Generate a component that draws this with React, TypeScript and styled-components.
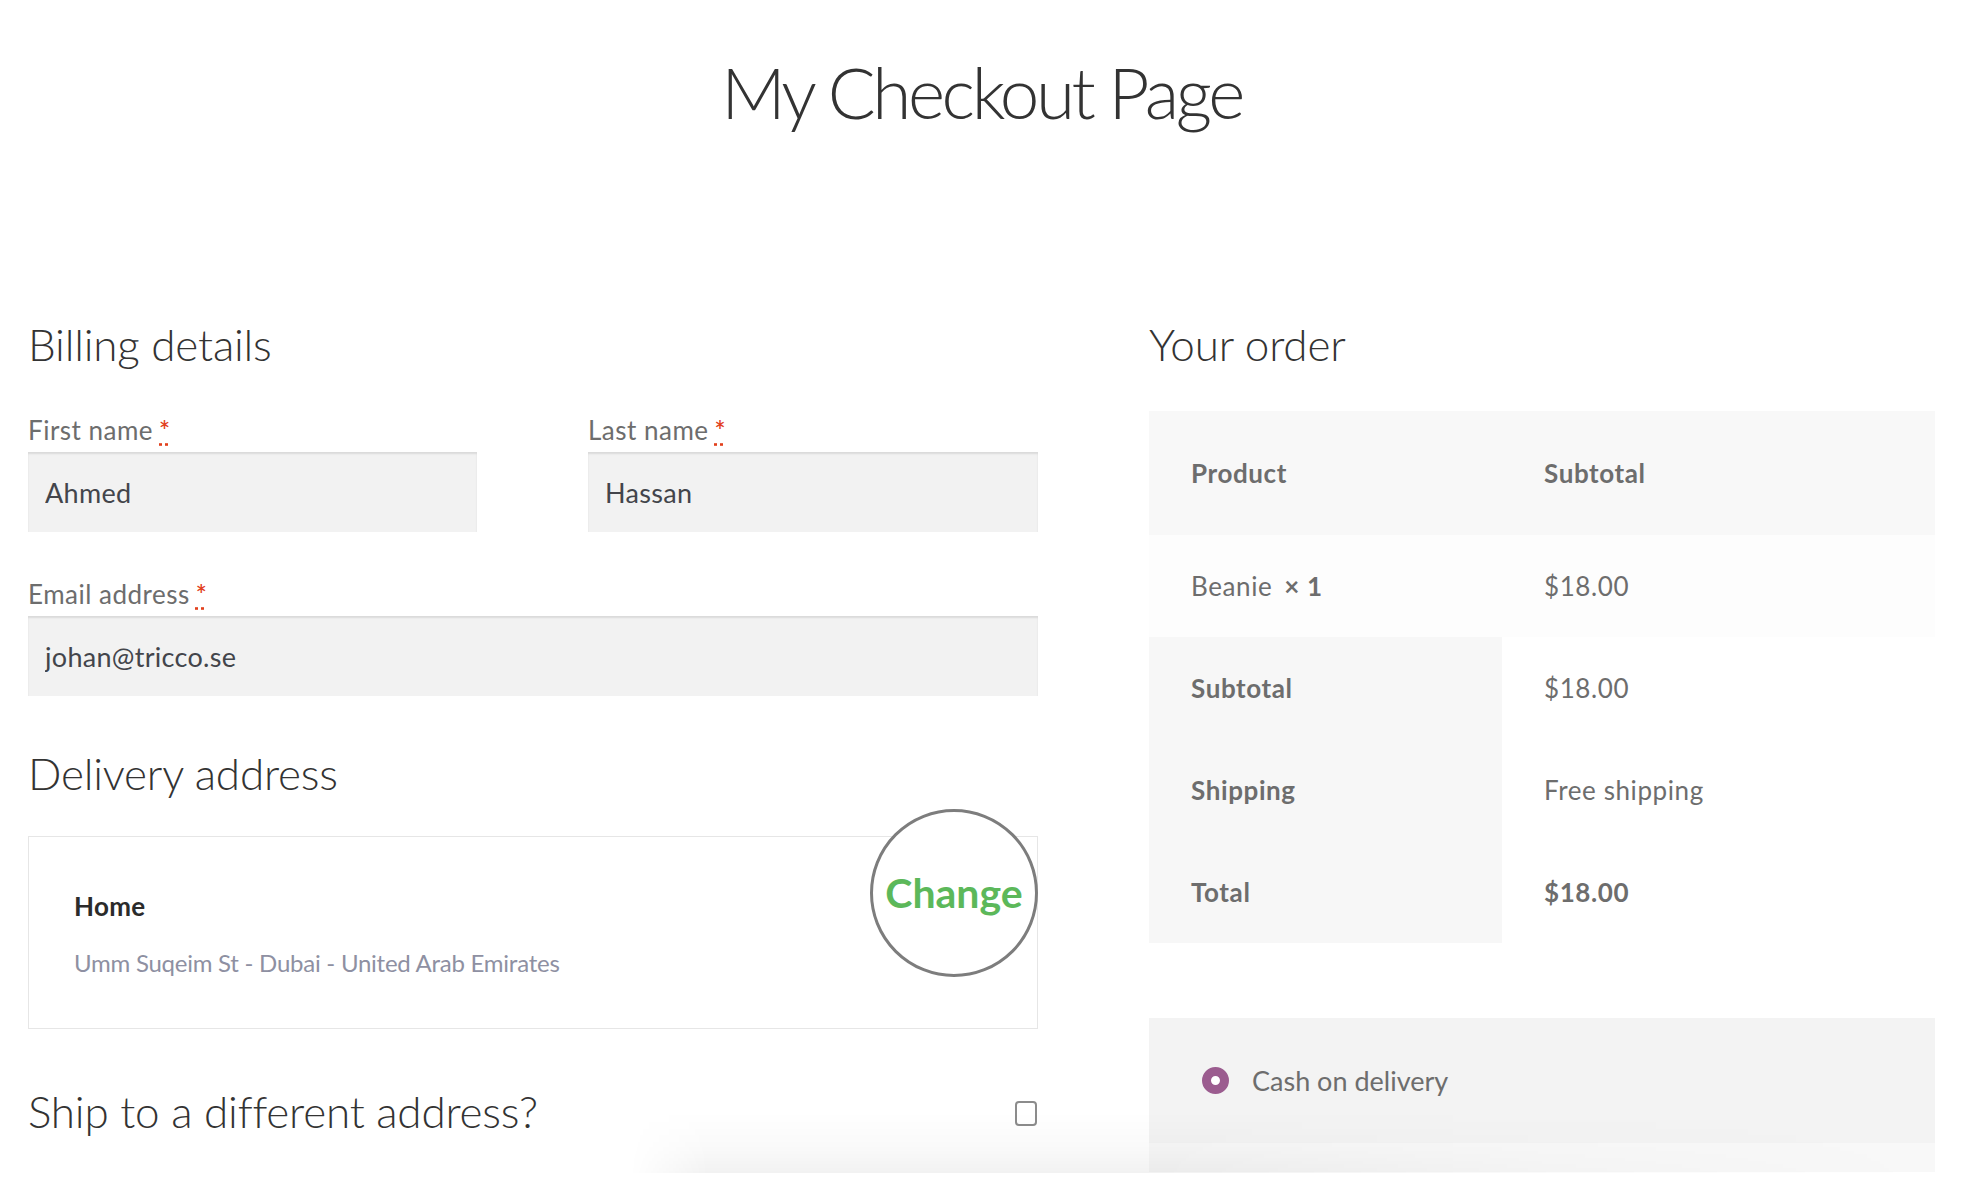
import React from 'react';
import styled, { createGlobalStyle } from 'styled-components';

const GlobalStyle = createGlobalStyle`
  html, body {
    margin: 0;
    padding: 0;
    background: #ffffff;
  }
  body {
    font-family: Lato, "Noto Sans", "Liberation Sans", sans-serif;
    color: #6d6d6d;
    -webkit-font-smoothing: antialiased;
  }
  * {
    box-sizing: border-box;
  }
`;

const Page = styled.div`
  position: relative;
  width: 1988px;
  height: 1184px;
  overflow: hidden;
  padding: 56px 53px 0 28px;
`;

const Title = styled.h1`
  margin: 0;
  font-size: 71px;
  line-height: 71px;
  font-weight: 300;
  color: #333333;
  text-align: center;
  letter-spacing: -3.4px;
`;

const Columns = styled.div`
  display: grid;
  grid-template-columns: 1010px 786px;
  justify-content: space-between;
  margin-top: 196px;
`;

const Column = styled.section`
  display: flex;
  flex-direction: column;
`;

const SectionHeading = styled.h3`
  margin: 0;
  font-size: 44px;
  line-height: 43px;
  font-weight: 300;
  color: #333333;
  letter-spacing: -0.2px;
`;

const FieldGrid = styled.div`
  display: grid;
  grid-template-columns: 449px 450px;
  justify-content: space-between;
  row-gap: 50px;
  margin-top: 52px;
`;

const Field = styled.div<{ $wide?: boolean }>`
  display: flex;
  flex-direction: column;
  gap: 9px;
  grid-column: ${(p) => (p.$wide ? '1 / -1' : 'auto')};
`;

const Label = styled.label`
  font-size: 26px;
  line-height: 25px;
  color: #6d6d6d;
  letter-spacing: 0.5px;
`;

const Required = styled.abbr`
  color: #e2401c;
  font-weight: 600;
  text-decoration: underline dotted;
  text-underline-offset: 3px;
  margin-left: 6px;
  cursor: help;
`;

const TextInput = styled.input`
  height: 80px;
  width: 100%;
  border: 0;
  outline: none;
  padding: 0 17px;
  background: #f2f2f2;
  box-shadow: inset 0 2px 2px rgba(0, 0, 0, 0.1);
  font-family: inherit;
  font-size: 27px;
  letter-spacing: 0.3px;
  color: #43454b;
`;

const DeliveryHeading = styled(SectionHeading)`
  margin-top: 56px;
`;

const AddressCard = styled.div`
  position: relative;
  margin-top: 41px;
  height: 193px;
  border: 1px solid #e6e6e6;
  padding: 56px 45px 0;
`;

const AddressName = styled.div`
  font-size: 26px;
  line-height: 26px;
  font-weight: 700;
  color: #2b2b2b;
  letter-spacing: 0.3px;
`;

const AddressLine = styled.div`
  margin-top: 32px;
  font-size: 24px;
  line-height: 24px;
  letter-spacing: -0.25px;
  color: #8e90a2;
`;

const ChangeBubble = styled.button`
  position: absolute;
  top: -28px;
  right: -1px;
  width: 168px;
  height: 168px;
  border-radius: 50%;
  border: 3px solid #7d7d7d;
  background: #ffffff;
  display: flex;
  align-items: center;
  justify-content: center;
  padding: 0 0 2px;
  font-family: inherit;
  font-size: 41px;
  font-weight: 700;
  color: #5cb85a;
  cursor: pointer;
`;

const ShipRow = styled.div`
  display: flex;
  align-items: center;
  justify-content: space-between;
  margin-top: 61px;
`;

const Checkbox = styled.input`
  appearance: none;
  width: 22px;
  height: 25px;
  margin: 4px 1px 0 0;
  border: 2px solid #8c8c8c;
  border-radius: 4px;
  background: #ffffff;
`;

const OrderTable = styled.table`
  margin-top: 45px;
  width: 100%;
  border-collapse: collapse;
  table-layout: fixed;
  font-size: 26px;
  letter-spacing: 0.6px;
  color: #6d6d6d;
`;

const HeadCell = styled.th<{ $w?: number }>`
  width: ${(p) => (p.$w ? `${p.$w}px` : 'auto')};
  height: 124px;
  padding: 0 42px;
  text-align: left;
  font-weight: 700;
  background: #f8f8f8;
`;

const Cell = styled.td<{ $bg?: string; $strong?: boolean }>`
  height: 102px;
  padding: 0 42px;
  text-align: left;
  background: ${(p) => p.$bg || '#ffffff'};
  font-weight: ${(p) => (p.$strong ? 700 : 400)};
`;

const RowHead = styled.th`
  height: 102px;
  padding: 0 42px;
  text-align: left;
  font-weight: 700;
  background: #f7f7f7;
`;

const Qty = styled.strong`
  margin-left: 12px;
  font-weight: 700;
`;

const Payment = styled.div`
  margin-top: 75px;
  background: #f3f3f3;
  display: flex;
  flex-direction: column;
`;

const PaymentMethod = styled.label`
  height: 125px;
  display: flex;
  align-items: center;
  gap: 23px;
  padding-left: 53px;
  font-size: 27px;
  color: #6d6d6d;
`;

const Radio = styled.span`
  width: 27px;
  height: 27px;
  border-radius: 50%;
  background: #ffffff;
  border: 9px solid #9b5c8f;
  flex-shrink: 0;
`;

const PaymentFooter = styled.div`
  height: 29px;
  background: #f8f8f8;
`;

const BottomHaze = styled.div`
  position: absolute;
  left: 630px;
  right: 53px;
  top: 1112px;
  height: 61px;
  pointer-events: none;
  background: linear-gradient(to bottom, rgba(0, 0, 0, 0), rgba(0, 0, 0, 0.02) 55%, rgba(0, 0, 0, 0.05));
  -webkit-mask-image: linear-gradient(to right, transparent, #000 6%, #000 40%, rgba(0, 0, 0, 0.35) 70%, transparent);
  mask-image: linear-gradient(to right, transparent, #000 6%, #000 40%, rgba(0, 0, 0, 0.35) 70%, transparent);
`;

const BottomEdge = styled.div`
  position: absolute;
  left: 0;
  right: 0;
  top: 1173px;
  bottom: 0;
  background: #ffffff;
`;

export default function App() {
  return (
    <>
      <GlobalStyle />
      <Page>
        <Title>My Checkout Page</Title>
        <Columns>
          <Column>
            <SectionHeading>Billing details</SectionHeading>
            <FieldGrid>
              <Field>
                <Label>
                  First name<Required title="required">*</Required>
                </Label>
                <TextInput defaultValue="Ahmed" />
              </Field>
              <Field>
                <Label>
                  Last name<Required title="required">*</Required>
                </Label>
                <TextInput defaultValue="Hassan" />
              </Field>
              <Field $wide>
                <Label>
                  Email address<Required title="required">*</Required>
                </Label>
                <TextInput defaultValue="johan@tricco.se" />
              </Field>
            </FieldGrid>

            <DeliveryHeading>Delivery address</DeliveryHeading>
            <AddressCard>
              <AddressName>Home</AddressName>
              <AddressLine>Umm Suqeim St - Dubai - United Arab Emirates</AddressLine>
              <ChangeBubble>Change</ChangeBubble>
            </AddressCard>

            <ShipRow>
              <SectionHeading>Ship to a different address?</SectionHeading>
              <Checkbox type="checkbox" />
            </ShipRow>
          </Column>

          <Column>
            <SectionHeading>Your order</SectionHeading>
            <OrderTable>
              <thead>
                <tr>
                  <HeadCell $w={353}>Product</HeadCell>
                  <HeadCell>Subtotal</HeadCell>
                </tr>
              </thead>
              <tbody>
                <tr>
                  <Cell $bg="#fdfdfd">
                    Beanie<Qty>× 1</Qty>
                  </Cell>
                  <Cell $bg="#fdfdfd">$18.00</Cell>
                </tr>
              </tbody>
              <tfoot>
                <tr>
                  <RowHead>Subtotal</RowHead>
                  <Cell>$18.00</Cell>
                </tr>
                <tr>
                  <RowHead>Shipping</RowHead>
                  <Cell>Free shipping</Cell>
                </tr>
                <tr>
                  <RowHead>Total</RowHead>
                  <Cell $strong>$18.00</Cell>
                </tr>
              </tfoot>
            </OrderTable>

            <Payment>
              <PaymentMethod>
                <Radio />
                Cash on delivery
              </PaymentMethod>
              <PaymentFooter />
            </Payment>
          </Column>
        </Columns>
        <BottomHaze />
        <BottomEdge />
      </Page>
    </>
  );
}
